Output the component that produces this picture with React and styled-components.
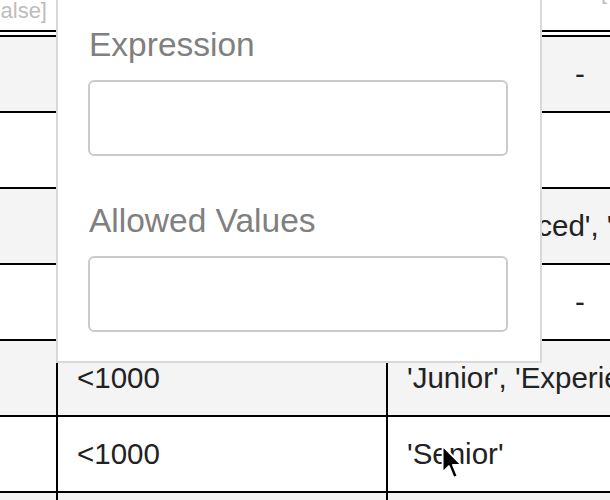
import React from "react";
import styled, { createGlobalStyle } from "styled-components";

const Global = createGlobalStyle`
  html, body { margin: 0; padding: 0; background: #fff; }
  body { font-family: "Liberation Sans", Arial, sans-serif; overflow: hidden; }
`;

const Page = styled.div`
  position: relative;
  width: 610px;
  height: 500px;
  overflow: hidden;
  background: #fff;
`;

const Table = styled.div`
  width: 772px;
  display: flex;
  flex-direction: column;
`;

const HeaderRow = styled.div`
  display: grid;
  grid-template-columns: 56px 330px 386px;
  height: 30px;
  border-bottom: 7px double #000;
  color: #bdbdbd;
  font-size: 22px;
  line-height: 22px;
`;

const HeaderCell = styled.div`
  display: flex;
  justify-content: ${(p) => (p.$align === "right" ? "flex-end" : "flex-start")};
  padding: ${(p) => p.$pad || "0"};
  overflow: visible;
  white-space: nowrap;
`;

const PeekText = styled.span`
  display: block;
  margin-top: -19px;
`;

const Row = styled.div`
  display: grid;
  grid-template-columns: 56px 330px 386px;
  height: 76px;
  box-sizing: border-box;
  border-bottom: 2px solid #000;
  background: ${(p) => (p.$shaded ? "#f4f4f4" : "#fff")};
`;

const Cell = styled.div`
  display: flex;
  align-items: center;
  justify-content: ${(p) => (p.$center ? "center" : "flex-start")};
  padding-left: ${(p) => (p.$center ? "0" : "19px")};
  border-left: ${(p) => (p.$first ? "none" : "2px solid #000")};
  font-size: 29.5px;
  color: #222;
  white-space: pre;
  overflow: hidden;
`;

const Popover = styled.div`
  position: absolute;
  left: 56px;
  top: -2px;
  width: 486px;
  height: 365px;
  box-sizing: border-box;
  border: 2px solid #d9d9d9;
  background: #fff;
  padding: 23px 30px 0 30px;
  display: flex;
  flex-direction: column;
  gap: 43px;
`;

const Field = styled.div`
  display: flex;
  flex-direction: column;
`;

const Label = styled.label`
  font-size: 33.5px;
  line-height: 38px;
  color: #808080;
  padding: 3px 0 0 1px;
  margin-bottom: 16px;
`;

const Input = styled.input`
  width: 420px;
  height: 76px;
  box-sizing: border-box;
  border: 2px solid #cbcbcb;
  border-radius: 6px;
  background: #fff;
  outline: none;
  font: inherit;
  font-size: 29px;
  padding: 0 16px;
`;

const Cursor = styled.svg`
  position: absolute;
  left: 441px;
  top: 444px;
  pointer-events: none;
`;

const rows = [
  { shaded: true, c2: "", c3: "-", center: true },
  { shaded: false, c2: "", c3: "" },
  { shaded: true, c2: "", c3: " 'Experienced', 'Senior'" },
  { shaded: false, c2: "", c3: "-", center: true },
  { shaded: true, c2: "<1000", c3: "'Junior', 'Experienced'" },
  { shaded: false, c2: "<1000", c3: "'Senior'" },
  { shaded: true, c2: "", c3: "" },
];

export default function App() {
  return (
    <Page>
      <Global />
      <Table>
        <HeaderRow>
          <HeaderCell $align="right" $pad="0 9px 0 0">alse]</HeaderCell>
          <HeaderCell />
          <HeaderCell $pad="0 0 0 215px">
            <PeekText>[</PeekText>
          </HeaderCell>
        </HeaderRow>
        {rows.map((r, i) => (
          <Row key={i} $shaded={r.shaded}>
            <Cell $first />
            <Cell>{r.c2}</Cell>
            <Cell $center={r.center}>{r.c3}</Cell>
          </Row>
        ))}
      </Table>
      <Popover>
        <Field>
          <Label>Expression</Label>
          <Input />
        </Field>
        <Field>
          <Label>Allowed Values</Label>
          <Input />
        </Field>
      </Popover>
      <Cursor width="22" height="38" viewBox="0 0 14 24">
        <path
          d="M1 1 L1 18 L5 14 L8 21.5 L10.6 20.4 L7.6 13.2 L13 13.2 Z"
          fill="#000"
          stroke="#fff"
          strokeWidth="1.2"
          strokeLinejoin="round"
        />
      </Cursor>
    </Page>
  );
}
